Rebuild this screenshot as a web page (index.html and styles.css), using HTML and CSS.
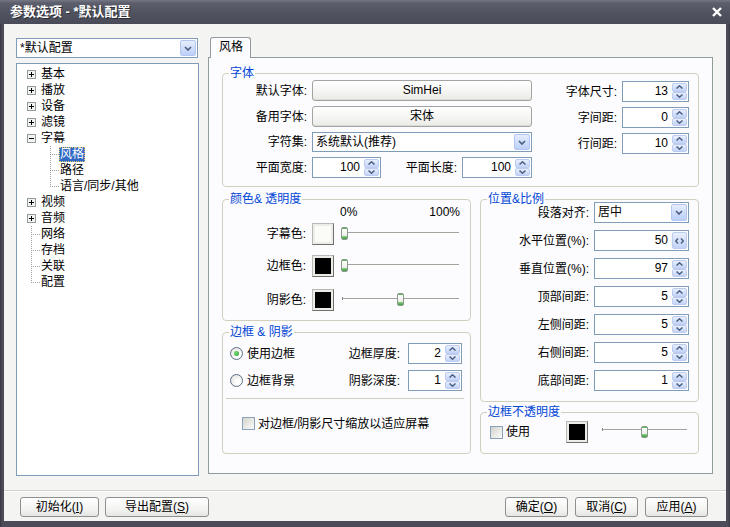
FILE: index.html
```html
<!DOCTYPE html>
<html lang="zh-CN">
<head>
<meta charset="utf-8">
<title>参数选项</title>
<link rel="stylesheet" href="styles.css">
</head>
<body>
<div class="window">
  <div class="titlebar">
    <span class="title">参数选项 - *默认配置</span>
    <svg class="close" width="10" height="10" viewBox="0 0 10 10"><path d="M1 1L9 9M9 1L1 9"/></svg>
  </div>
  <div class="frame">
    <div class="client">
      <div class="main">
        <div class="leftcol">
          <div class="combo top-combo">
            <span class="ctext">*默认配置</span>
            <span class="cbtn"><svg width="8" height="5" viewBox="0 0 8 5"><path d="M1 1L4 4L7 1"/></svg></span>
          </div>
          <div class="tree">
            <div class="ti root"><span class="twig"><svg width="9" height="9" viewBox="0 0 9 9"><rect x="0.5" y="0.5" width="8" height="8"/><path d="M2 4.5H7M4.5 2V7"/></svg></span><span class="tl">基本</span></div>
            <div class="ti root"><span class="twig"><svg width="9" height="9" viewBox="0 0 9 9"><rect x="0.5" y="0.5" width="8" height="8"/><path d="M2 4.5H7M4.5 2V7"/></svg></span><span class="tl">播放</span></div>
            <div class="ti root"><span class="twig"><svg width="9" height="9" viewBox="0 0 9 9"><rect x="0.5" y="0.5" width="8" height="8"/><path d="M2 4.5H7M4.5 2V7"/></svg></span><span class="tl">设备</span></div>
            <div class="ti root"><span class="twig"><svg width="9" height="9" viewBox="0 0 9 9"><rect x="0.5" y="0.5" width="8" height="8"/><path d="M2 4.5H7M4.5 2V7"/></svg></span><span class="tl">滤镜</span></div>
            <div class="ti root"><span class="twig"><svg width="9" height="9" viewBox="0 0 9 9"><rect x="0.5" y="0.5" width="8" height="8"/><path d="M2 4.5H7"/></svg></span><span class="tl">字幕</span></div>
            <div class="ti child"><span class="twig leaf"></span><span class="tl sel">风格</span></div>
            <div class="ti child"><span class="twig leaf"></span><span class="tl">路径</span></div>
            <div class="ti child"><span class="twig leaf last"></span><span class="tl">语言/同步/其他</span></div>
            <div class="ti root"><span class="twig"><svg width="9" height="9" viewBox="0 0 9 9"><rect x="0.5" y="0.5" width="8" height="8"/><path d="M2 4.5H7M4.5 2V7"/></svg></span><span class="tl">视频</span></div>
            <div class="ti root"><span class="twig"><svg width="9" height="9" viewBox="0 0 9 9"><rect x="0.5" y="0.5" width="8" height="8"/><path d="M2 4.5H7M4.5 2V7"/></svg></span><span class="tl">音频</span></div>
            <div class="ti root"><span class="twig leaf"></span><span class="tl">网络</span></div>
            <div class="ti root"><span class="twig leaf"></span><span class="tl">存档</span></div>
            <div class="ti root"><span class="twig leaf"></span><span class="tl">关联</span></div>
            <div class="ti root"><span class="twig leaf last"></span><span class="tl">配置</span></div>
          </div>
        </div>

        <div class="rightcol">
          <div class="tabs"><div class="tab">风格</div></div>
          <div class="panel">

            <div class="group g-font">
              <span class="legend">字体</span>
              <div class="col">
                <div class="row"><span class="lbl l84">默认字体:</span><div class="pbtn w220">SimHei</div></div>
                <div class="row"><span class="lbl l84">备用字体:</span><div class="pbtn w220">宋体</div></div>
                <div class="row r20"><span class="lbl l84">字符集:</span>
                  <div class="combo w220"><span class="ctext">系统默认(推荐)</span><span class="cbtn"><svg width="8" height="5" viewBox="0 0 8 5"><path d="M1 1L4 4L7 1"/></svg></span></div>
                </div>
                <div class="row"><span class="lbl l84">平面宽度:</span>
                  <div class="spin w69"><span class="val">100</span><span class="sbtns"><span class="sb"><svg width="7" height="4" viewBox="0 0 7 4"><path d="M0.5 3.5L3.5 0.8L6.5 3.5"/></svg></span><span class="sb"><svg width="7" height="4" viewBox="0 0 7 4"><path d="M0.5 0.5L3.5 3.2L6.5 0.5"/></svg></span></span></div>
                  <span class="lbl l76">平面长度:</span>
                  <div class="spin w70"><span class="val">100</span><span class="sbtns"><span class="sb"><svg width="7" height="4" viewBox="0 0 7 4"><path d="M0.5 3.5L3.5 0.8L6.5 3.5"/></svg></span><span class="sb"><svg width="7" height="4" viewBox="0 0 7 4"><path d="M0.5 0.5L3.5 3.2L6.5 0.5"/></svg></span></span></div>
                </div>
              </div>
              <div class="col col-right">
                <div class="row"><span class="lbl l80">字体尺寸:</span>
                  <div class="spin w67"><span class="val">13</span><span class="sbtns"><span class="sb"><svg width="7" height="4" viewBox="0 0 7 4"><path d="M0.5 3.5L3.5 0.8L6.5 3.5"/></svg></span><span class="sb"><svg width="7" height="4" viewBox="0 0 7 4"><path d="M0.5 0.5L3.5 3.2L6.5 0.5"/></svg></span></span></div>
                </div>
                <div class="row"><span class="lbl l80">字间距:</span>
                  <div class="spin w67"><span class="val">0</span><span class="sbtns"><span class="sb"><svg width="7" height="4" viewBox="0 0 7 4"><path d="M0.5 3.5L3.5 0.8L6.5 3.5"/></svg></span><span class="sb"><svg width="7" height="4" viewBox="0 0 7 4"><path d="M0.5 0.5L3.5 3.2L6.5 0.5"/></svg></span></span></div>
                </div>
                <div class="row"><span class="lbl l80">行间距:</span>
                  <div class="spin w67"><span class="val">10</span><span class="sbtns"><span class="sb"><svg width="7" height="4" viewBox="0 0 7 4"><path d="M0.5 3.5L3.5 0.8L6.5 3.5"/></svg></span><span class="sb"><svg width="7" height="4" viewBox="0 0 7 4"><path d="M0.5 0.5L3.5 3.2L6.5 0.5"/></svg></span></span></div>
                </div>
              </div>
            </div>

            <div class="cols">
              <div class="colL">
                <div class="group g-color">
                  <span class="legend">颜色&amp; 透明度</span>
                  <div class="pct"><span>0%</span><span>100%</span></div>
                  <div class="crow"><span class="lbl l83">字幕色:</span><span class="swatch white"></span><div class="slider s118"><span class="thumb" style="left:0px"></span></div></div>
                  <div class="crow mt10"><span class="lbl l83">边框色:</span><span class="swatch black"></span><div class="slider s118"><span class="thumb" style="left:0px"></span></div></div>
                  <div class="crow mt12"><span class="lbl l83">阴影色:</span><span class="swatch black"></span><div class="slider s118 tick"><span class="thumb" style="left:56px"></span></div></div>
                </div>

                <div class="group g-border">
                  <span class="legend">边框 &amp; 阴影</span>
                  <div class="b-top">
                    <div class="radios">
                      <div class="rrow"><span class="radio on"></span>使用边框</div>
                      <div class="rrow"><span class="radio"></span>边框背景</div>
                    </div>
                    <div class="bspins">
                      <div class="row"><span class="lbl wide">边框厚度:</span>
                        <div class="spin w54"><span class="val">2</span><span class="sbtns"><span class="sb"><svg width="7" height="4" viewBox="0 0 7 4"><path d="M0.5 3.5L3.5 0.8L6.5 3.5"/></svg></span><span class="sb"><svg width="7" height="4" viewBox="0 0 7 4"><path d="M0.5 0.5L3.5 3.2L6.5 0.5"/></svg></span></span></div>
                      </div>
                      <div class="row"><span class="lbl wide">阴影深度:</span>
                        <div class="spin w54"><span class="val">1</span><span class="sbtns"><span class="sb"><svg width="7" height="4" viewBox="0 0 7 4"><path d="M0.5 3.5L3.5 0.8L6.5 3.5"/></svg></span><span class="sb"><svg width="7" height="4" viewBox="0 0 7 4"><path d="M0.5 0.5L3.5 3.2L6.5 0.5"/></svg></span></span></div>
                      </div>
                    </div>
                  </div>
                  <div class="hr"></div>
                  <div class="chkrow"><span class="check"></span>对边框/阴影尺寸缩放以适应屏幕</div>
                </div>
              </div>

              <div class="colR">
                <div class="group g-pos">
                  <span class="legend">位置&amp;比例</span>
                  <div class="row"><span class="lbl l108">段落对齐:</span>
                    <div class="combo w95 h21"><span class="ctext">居中</span><span class="cbtn"><svg width="8" height="5" viewBox="0 0 8 5"><path d="M1 1L4 4L7 1"/></svg></span></div>
                  </div>
                  <div class="row"><span class="lbl l108">水平位置(%):</span>
                    <div class="spin w95"><span class="val">50</span><span class="sbtns"><span class="sb"><svg width="9" height="6" viewBox="0 0 9 6"><path d="M3 0.5L0.8 3L3 5.5M6 0.5L8.2 3L6 5.5"/></svg></span></span></div>
                  </div>
                  <div class="row"><span class="lbl l108">垂直位置(%):</span>
                    <div class="spin w95"><span class="val">97</span><span class="sbtns"><span class="sb"><svg width="7" height="4" viewBox="0 0 7 4"><path d="M0.5 3.5L3.5 0.8L6.5 3.5"/></svg></span><span class="sb"><svg width="7" height="4" viewBox="0 0 7 4"><path d="M0.5 0.5L3.5 3.2L6.5 0.5"/></svg></span></span></div>
                  </div>
                  <div class="row"><span class="lbl l108">顶部间距:</span>
                    <div class="spin w95"><span class="val">5</span><span class="sbtns"><span class="sb"><svg width="7" height="4" viewBox="0 0 7 4"><path d="M0.5 3.5L3.5 0.8L6.5 3.5"/></svg></span><span class="sb"><svg width="7" height="4" viewBox="0 0 7 4"><path d="M0.5 0.5L3.5 3.2L6.5 0.5"/></svg></span></span></div>
                  </div>
                  <div class="row"><span class="lbl l108">左侧间距:</span>
                    <div class="spin w95"><span class="val">5</span><span class="sbtns"><span class="sb"><svg width="7" height="4" viewBox="0 0 7 4"><path d="M0.5 3.5L3.5 0.8L6.5 3.5"/></svg></span><span class="sb"><svg width="7" height="4" viewBox="0 0 7 4"><path d="M0.5 0.5L3.5 3.2L6.5 0.5"/></svg></span></span></div>
                  </div>
                  <div class="row"><span class="lbl l108">右侧间距:</span>
                    <div class="spin w95"><span class="val">5</span><span class="sbtns"><span class="sb"><svg width="7" height="4" viewBox="0 0 7 4"><path d="M0.5 3.5L3.5 0.8L6.5 3.5"/></svg></span><span class="sb"><svg width="7" height="4" viewBox="0 0 7 4"><path d="M0.5 0.5L3.5 3.2L6.5 0.5"/></svg></span></span></div>
                  </div>
                  <div class="row"><span class="lbl l108">底部间距:</span>
                    <div class="spin w95"><span class="val">1</span><span class="sbtns"><span class="sb"><svg width="7" height="4" viewBox="0 0 7 4"><path d="M0.5 3.5L3.5 0.8L6.5 3.5"/></svg></span><span class="sb"><svg width="7" height="4" viewBox="0 0 7 4"><path d="M0.5 0.5L3.5 3.2L6.5 0.5"/></svg></span></span></div>
                  </div>
                </div>

                <div class="group g-opac">
                  <span class="legend">边框不透明度</span>
                  <div class="orow">
                    <span class="chkl"><span class="check"></span>使用</span>
                    <span class="swatch black"></span>
                    <div class="slider s86 small tick"><span class="thumb" style="left:40px"></span></div>
                  </div>
                </div>
              </div>
            </div>

          </div>
        </div>
      </div>

      <div class="sep"></div>
      <div class="buttons">
        <div class="btn b79">初始化(<u>I</u>)</div>
        <div class="btn b104">导出配置(<u>S</u>)</div>
        <div class="btn-right">
          <div class="btn b63">确定(<u>O</u>)</div>
          <div class="btn b63">取消(<u>C</u>)</div>
          <div class="btn b63">应用(<u>A</u>)</div>
        </div>
      </div>
    </div>
  </div>
</div>
</body>
</html>
```

FILE: styles.css
```css
* { box-sizing: border-box; }
html, body { margin: 0; padding: 0; }
body {
  width: 730px;
  height: 527px;
  overflow: hidden;
  font-family: "Liberation Sans", "Noto Sans CJK SC", sans-serif;
  font-size: 12px;
  line-height: 14px;
  color: #000;
  background: #3f404b;
}

.window { width: 730px; height: 527px; display: flex; flex-direction: column; }

.titlebar {
  height: 24px;
  flex: none;
  display: flex;
  align-items: center;
  justify-content: space-between;
  padding: 0 8px 0 10px;
  background: linear-gradient(#767784 0, #5d5e6b 3px, #51525f 55%, #4a4b58 100%);
  color: #fff;
  font-weight: bold;
  font-size: 13px;
}
.title { text-shadow: 1px 1px 0 #2b2b34; }
.close path { stroke: #fff; stroke-width: 2.4; fill: none; }

.frame {
  flex: 1;
  padding: 0 4px 6px 4px;
  background: linear-gradient(90deg, #35363f 0, #4b4c57 2px, #4b4c57 calc(100% - 2px), #35363f 100%);
}
.client {
  height: 100%;
  background: #f4f4f2;
  display: flex;
  flex-direction: column;
}

.main { height: 452px; display: flex; padding: 13px 0 0 12px; }

.leftcol { width: 183px; display: flex; flex-direction: column; flex: none; }
.top-combo { margin-top: 1px; width: 182px; }

.combo {
  display: flex;
  height: 20px;
  border: 1px solid #7f9db9;
  background: #fff;
}
.combo.h21 { height: 21px; }
.ctext { flex: 1; padding-left: 3px; line-height: 18px; white-space: nowrap; overflow: hidden; }
.cbtn {
  width: 16px;
  margin: 1px;
  border: 1px solid #b3c6f2;
  border-radius: 2px;
  background: linear-gradient(#e6eefd, #bccff8);
  display: flex;
  align-items: center;
  justify-content: center;
}
.cbtn path { fill: none; stroke: #4d6185; stroke-width: 1.7; }

.tree {
  margin-top: 5px;
  height: 413px;
  border: 1px solid #7f9db9;
  background: #fff;
  padding-top: 2px;
}
.ti { height: 16px; display: flex; align-items: center; }
.ti.root { padding-left: 10px; }
.ti.child { padding-left: 29px; }
.twig { width: 14px; height: 16px; flex: none; display: flex; align-items: center; }
.twig rect { fill: #f3f3ef; stroke: #919b9c; }
.twig path { stroke: #000; stroke-width: 1; }
.twig.leaf {
  background:
    repeating-linear-gradient(to bottom, #a0a0a0 0 1px, transparent 1px 2px) 4px 0 / 1px 16px no-repeat,
    repeating-linear-gradient(to right, #a0a0a0 0 1px, transparent 1px 2px) 6px 8px / 8px 1px no-repeat;
}
.twig.leaf.last { background-size: 1px 9px, 8px 1px; }
.tl { padding: 0 1px; height: 15px; line-height: 15px; white-space: nowrap; margin-left: -1px; }
.tl.sel { background: #316ac5; color: #fff; outline: 1px dotted #e8c870; outline-offset: -1px; }

.rightcol { margin-left: 9px; width: 505px; flex: none; }
.tabs { height: 20px; display: flex; padding-left: 2px; }
.tab {
  position: relative;
  z-index: 1;
  width: 41px;
  height: 21px;
  border: 1px solid #919b9c;
  border-bottom: none;
  border-radius: 3px 3px 0 0;
  background: #fcfcfe;
  padding-left: 8px;
  line-height: 19px;
}
.panel {
  height: 417px;
  border: 1px solid #919b9c;
  background: #fcfcfe;
  padding: 15px 13px 0 13px;
}

.group {
  position: relative;
  border: 1px solid #d0d0bf;
  border-radius: 4px;
}
.legend {
  position: absolute;
  top: -8px;
  left: 6px;
  padding: 0 1px;
  background: #fcfcfe;
  color: #0046d5;
  line-height: 14px;
  white-space: nowrap;
}

.g-font {
  height: 114px;
  padding: 6px 9px 0 0;
  display: flex;
  justify-content: space-between;
}
.col { display: flex; flex-direction: column; gap: 5px; }
.col-right { margin-top: 1px; }
.row { display: flex; align-items: center; height: 21px; }
.row.r20 { height: 20px; }
.lbl { flex: none; text-align: right; margin-right: 5px; white-space: nowrap; }
.l76 { width: 76px; }
.l80 { width: 80px; }
.l83 { width: 83px; }
.l84 { width: 84px; }
.l108 { width: 108px; }
.lbl.wide { margin-right: 8px; }

.w54 { width: 54px; }
.w67 { width: 67px; }
.w69 { width: 69px; }
.w70 { width: 70px; }
.w95 { width: 95px; }
.w220 { width: 220px; }

.pbtn {
  height: 21px;
  border: 1px solid #a3a3a3;
  border-radius: 3px;
  background: linear-gradient(#ffffff, #f4f4f2 60%, #e9e9e5);
  text-align: center;
  line-height: 19px;
  box-shadow: inset 0 -1px 0 #dcdcd6;
}

.spin {
  display: flex;
  height: 21px;
  border: 1px solid #7f9db9;
  background: #fff;
  flex: none;
}
.val { flex: 1; text-align: right; padding-right: 4px; line-height: 19px; }
.sbtns { width: 16px; display: flex; flex-direction: column; padding: 1px 1px 1px 0; }
.sb {
  flex: 1;
  border: 1px solid #bccbf0;
  border-radius: 2px;
  background: linear-gradient(#e8effd, #c3d3f7);
  display: flex;
  align-items: center;
  justify-content: center;
}
.sb path { fill: none; stroke: #4d6185; stroke-width: 1.5; }

.cols { display: flex; gap: 9px; margin-top: 12px; }
.colL { width: 249px; flex: none; }
.colR { width: 219px; flex: none; }

.g-color { height: 122px; padding: 6px 10px 0 0; }
.pct { height: 12px; line-height: 12px; display: flex; justify-content: space-between; padding-left: 117px; }
.crow { height: 22px; display: flex; align-items: center; margin-top: 5px; }
.crow.mt10 { margin-top: 10px; }
.crow.mt12 { margin-top: 12px; }
.crow .lbl { margin-right: 6px; }

.swatch {
  width: 22px;
  height: 22px;
  flex: none;
  border: 1px solid;
  border-color: #b8b8b4 #6f6f6c #6f6f6c #b8b8b4;
  padding: 2px;
}
.swatch.white { background: linear-gradient(#fbfbf8, #fbfbf8) content-box, #ecece8; }
.swatch.black { background: linear-gradient(#000, #000) content-box, #ecece8; }

.slider { position: relative; height: 22px; flex: none; margin-left: 7px; }
.s118 { width: 118px; }
.s86 { width: 86px; margin-left: 13px; }
.slider::before {
  content: "";
  position: absolute;
  left: 1px;
  right: 0;
  top: 9px;
  border-top: 1px solid #a2a29e;
  border-bottom: 1px solid #fff;
}
.slider.tick::after {
  content: "";
  position: absolute;
  left: 1px;
  top: 8px;
  width: 1px;
  height: 3px;
  background: #8a8a86;
}
.slider.small::before { top: 8px; }
.slider.small::after { top: 7px; }
.thumb {
  position: absolute;
  z-index: 1;
  top: 4px;
  width: 7px;
  height: 13px;
  border: 1px solid #8a998a;
  border-radius: 2px;
  background: linear-gradient(#5fb85f 0 1px, #ffffff 1px, #ecece6 8px, #8ccf8c 8px, #3f9f3f 11px);
}
.slider.small .thumb { top: 5px; height: 12px; background: linear-gradient(#5fb85f 0 1px, #ffffff 1px, #ecece6 7px, #8ccf8c 7px, #3f9f3f 10px); }

.g-border { height: 122px; margin-top: 11px; }
.b-top { display: flex; padding-top: 10px; }
.radios { padding-left: 7px; display: flex; flex-direction: column; gap: 6px; }
.rrow { height: 21px; display: flex; align-items: center; }
.radio {
  position: relative;
  width: 13px;
  height: 13px;
  flex: none;
  border-radius: 50%;
  border: 1px solid #5d7088;
  background: radial-gradient(circle at 65% 65%, #ffffff 20%, #dcdcd6);
  margin-right: 4px;
}
.radio.on::after {
  content: "";
  position: absolute;
  left: 3px;
  top: 3px;
  width: 5px;
  height: 5px;
  border-radius: 50%;
  background: radial-gradient(circle at 40% 40%, #7ee07e, #1e9a1e);
}
.bspins { margin-left: auto; padding-right: 8px; display: flex; flex-direction: column; gap: 6px; }
.hr { margin: 7px 6px 0 3px; border-top: 1px solid #d0d0bf; }
.chkrow { margin-top: 18px; padding-left: 19px; display: flex; align-items: center; height: 13px; }
.check {
  width: 13px;
  height: 13px;
  flex: none;
  border: 1px solid #8aa0bc;
  background: linear-gradient(135deg, #d4d4ce, #fbfbf9);
  margin-right: 3px;
}

.g-pos { height: 203px; padding: 2px 9px 0 0; display: flex; flex-direction: column; gap: 7px; }

.g-opac { height: 42px; margin-top: 10px; padding: 8px 0 0 9px; }
.orow { display: flex; align-items: center; height: 22px; }
.chkl { width: 76px; flex: none; display: flex; align-items: center; }

.sep { margin-top: 14px; height: 2px; border-top: 1px solid #d3d3ce; border-bottom: 1px solid #ffffff; }
.buttons { margin-top: 5px; display: flex; gap: 6px; padding: 0 18px 0 16px; }
.btn-right { margin-left: auto; display: flex; gap: 7px; }
.btn {
  height: 20px;
  border: 1px solid #8e8f8f;
  border-radius: 3px;
  background: linear-gradient(#ffffff, #f3f3f1 65%, #e4e4e0);
  text-align: center;
  line-height: 18px;
  white-space: nowrap;
}
.b63 { width: 63px; }
.b79 { width: 79px; }
.b104 { width: 104px; }
```
